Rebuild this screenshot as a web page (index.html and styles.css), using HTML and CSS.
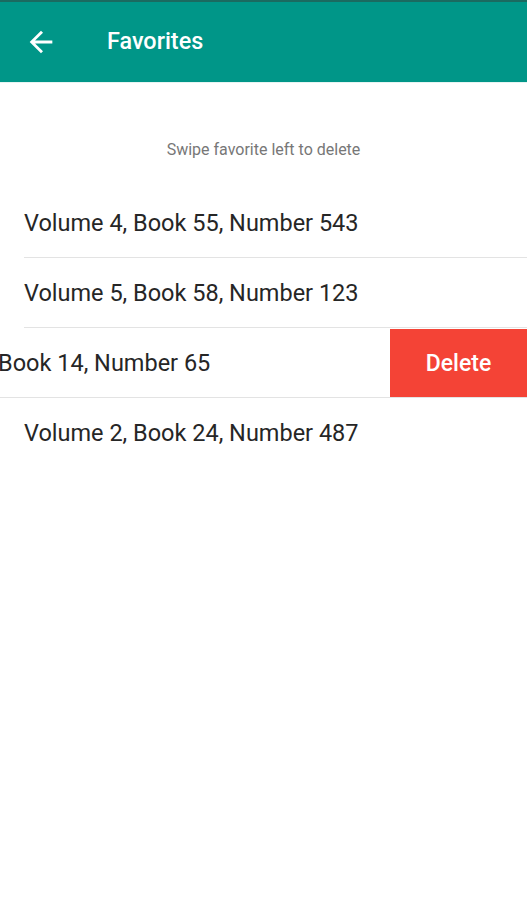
FILE: index.html
```html
<!DOCTYPE html>
<html lang="en">
<head>
    <meta charset="UTF-8">
    <meta name="viewport" content="width=device-width, initial-scale=1.0">
    <title>Favorites</title>
    <link rel="stylesheet" href="styles.css">
</head>
<body>

    <!-- شريط العنوان -->
    <div class="toolbar">
        <button class="back-btn">
            <svg viewBox="0 0 24 24"><path d="M20 11H7.83l5.59-5.59L12 4l-8 8 8 8 1.41-1.41L7.83 13H20v-2z" fill="#fff"/></svg>
        </button>
        <div class="toolbar-title">Favorites</div>
    </div>

    <div class="hint">Swipe favorite left to delete</div>

    <div class="fav-list">
        <div class="fav-row"><div class="fav-item">Volume 4, Book 55, Number 543</div></div>
        <div class="fav-row"><div class="fav-item">Volume 5, Book 58, Number 123</div></div>
        <!-- الصف المسحوب لليسار -->
        <div class="fav-row swiped">
            <div class="fav-item">Volume 3, Book 14, Number 65</div>
            <div class="delete-btn">Delete</div>
        </div>
        <div class="fav-row"><div class="fav-item last">Volume 2, Book 24, Number 487</div></div>
    </div>

</body>
</html>
```

FILE: styles.css
```css
body {
    font-family: Roboto, "Noto Sans", Arial, sans-serif;
    margin: 0;
    padding: 0;
    background-color: #ffffff;
    height: 900px;
    overflow: hidden;
}

.toolbar {
    height: 80px;
    background: #009688;
    border-top: 2px solid #1b6a60;
    border-bottom: 1px solid #e6f4f2;
    display: flex;
    align-items: center;
}

.back-btn {
    background: none;
    border: none;
    padding: 0;
    margin-left: 24px;
    width: 34px;
    height: 34px;
    display: flex;
}

.back-btn svg {
    width: 34px;
    height: 34px;
}

.toolbar-title {
    color: white;
    font-size: 23.4px;
    font-weight: 500;
    margin-left: 49px;
    padding-bottom: 2px;
}

.hint {
    text-align: center;
    color: #777777;
    font-size: 16px;
    line-height: 19px;
    margin-top: 57px;
    margin-bottom: 29px;
}

.fav-list {
    display: flex;
    flex-direction: column;
}

.fav-row {
    display: flex;
    overflow: hidden;
    height: 70px;
}

.fav-item {
    flex: 1 1 auto;
    min-width: 0;
    box-sizing: border-box;
    margin-left: 24px;
    display: flex;
    align-items: center;
    font-size: 23.5px;
    color: #262626;
    border-bottom: 1px solid #e3e3e3;
    white-space: nowrap;
}

.fav-item.last {
    border-bottom: none;
}

.swiped .fav-item {
    margin-left: -111px;
}

.delete-btn {
    flex: 0 0 137px;
    background: #f44336;
    color: white;
    font-size: 23px;
    font-weight: 500;
    display: flex;
    align-items: center;
    justify-content: center;
    border-top: 1px solid #ffffff;
    border-bottom: 1px solid #e3e3e3;
    box-sizing: border-box;
}
```
